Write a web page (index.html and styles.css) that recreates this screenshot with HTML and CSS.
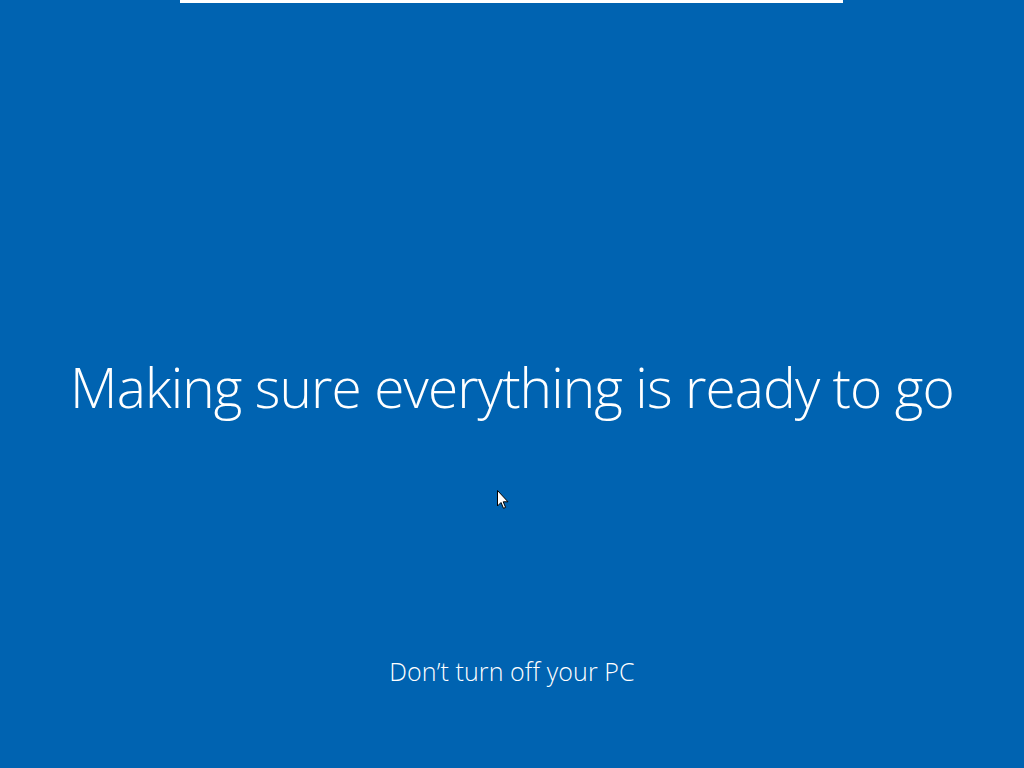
FILE: index.html
```html
<!DOCTYPE html>
<html lang="en">
<head>
    <meta charset="UTF-8">
    <meta name="viewport" content="width=device-width, initial-scale=1.0">
    <title>Windows Setup</title>
    <link rel="stylesheet" href="styles.css">
</head>
<body>
    <div class="screen">
        <div class="progress"></div>
        <h1 class="title">Making sure everything is ready to go</h1>
        <p class="note">Don’t turn off your PC</p>

        <!-- mouse pointer -->
        <svg class="cursor" width="12" height="19" viewBox="0 0 12 19">
            <path d="M0.5 0.5 L0.5 16 L4 12.5 L6.5 18.3 L8.6 17.4 L6.2 11.8 L11 11.8 Z" fill="#fff" stroke="#000" stroke-width="1" stroke-linejoin="miter"/>
        </svg>
    </div>
</body>
</html>
```

FILE: styles.css
```css
/* page */
body {
    margin: 0;
    background: #0063b1;
    font-family: "Open Sans", "Noto Sans", sans-serif;
    color: #fff;
}

.screen {
    position: relative;
    height: 768px;
    display: flex;
    flex-direction: column;
    align-items: center;
    overflow: hidden;
}

.progress {
    align-self: flex-start;
    margin-left: 180px;
    width: 663px;
    height: 3px;
    background: #fff;
}

.title {
    margin: 356px 0 0 0;
    font-size: 55px;
    font-weight: 300;
    letter-spacing: -0.9px;
    line-height: 1;
    white-space: nowrap;
}

.note {
    margin: 245px 0 0 0;
    font-size: 25px;
    font-weight: 300;
    letter-spacing: 0.1px;
    line-height: 1;
}

.cursor {
    position: absolute;
    left: 497px;
    top: 490px;
}
```
